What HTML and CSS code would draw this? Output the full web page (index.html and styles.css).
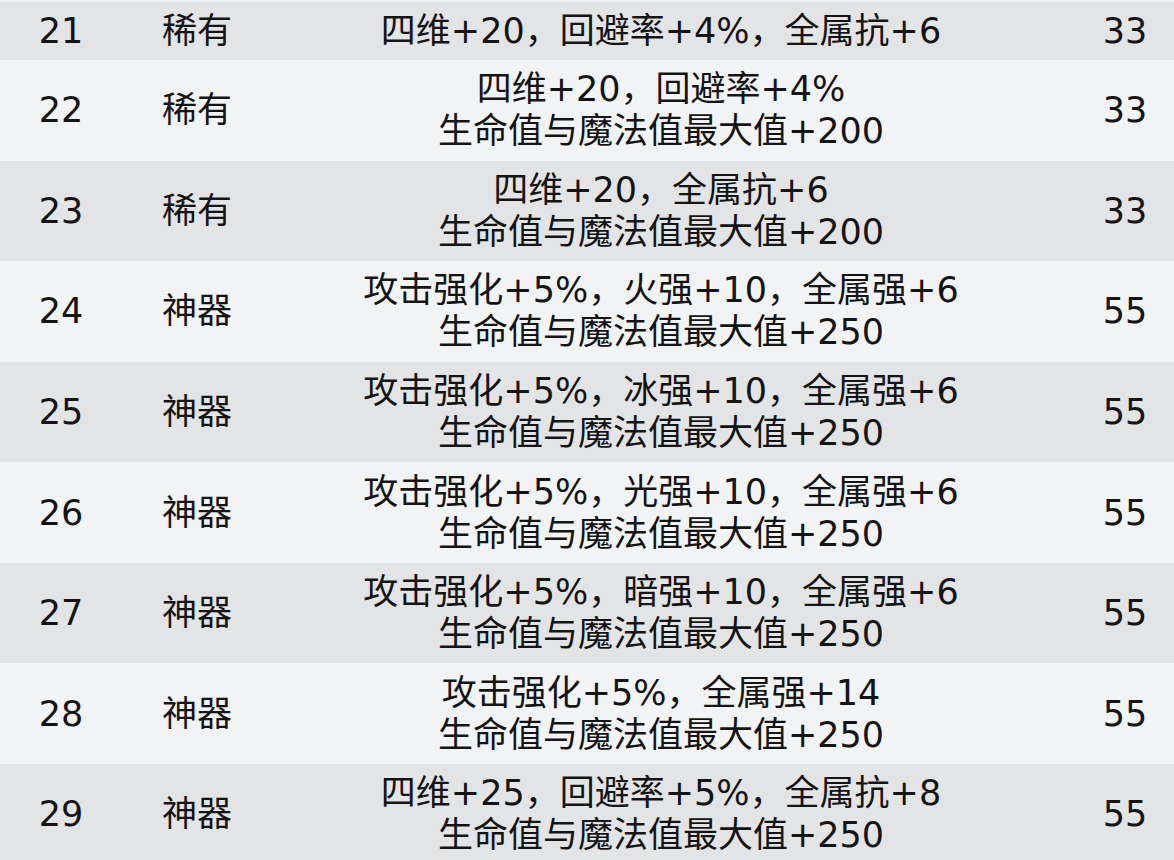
FILE: index.html
```html
<!DOCTYPE html>
<html lang="zh-CN">
<head>
<meta charset="utf-8">
<link rel="stylesheet" href="styles.css">
</head>
<body>
<div class="table">
  <div class="row gray first"><div class="c num">21</div><div class="c rare">稀有</div><div class="c eff">四维+20，回避率+4%，全属抗+6</div><div class="c val">33</div></div>
  <div class="row light"><div class="c num">22</div><div class="c rare">稀有</div><div class="c eff">四维+20，回避率+4%<br>生命值与魔法值最大值+200</div><div class="c val">33</div></div>
  <div class="row gray"><div class="c num">23</div><div class="c rare">稀有</div><div class="c eff">四维+20，全属抗+6<br>生命值与魔法值最大值+200</div><div class="c val">33</div></div>
  <div class="row light"><div class="c num">24</div><div class="c rare">神器</div><div class="c eff">攻击强化+5%，火强+10，全属强+6<br>生命值与魔法值最大值+250</div><div class="c val">55</div></div>
  <div class="row gray"><div class="c num">25</div><div class="c rare">神器</div><div class="c eff">攻击强化+5%，冰强+10，全属强+6<br>生命值与魔法值最大值+250</div><div class="c val">55</div></div>
  <div class="row light"><div class="c num">26</div><div class="c rare">神器</div><div class="c eff">攻击强化+5%，光强+10，全属强+6<br>生命值与魔法值最大值+250</div><div class="c val">55</div></div>
  <div class="row gray"><div class="c num">27</div><div class="c rare">神器</div><div class="c eff">攻击强化+5%，暗强+10，全属强+6<br>生命值与魔法值最大值+250</div><div class="c val">55</div></div>
  <div class="row light"><div class="c num">28</div><div class="c rare">神器</div><div class="c eff">攻击强化+5%，全属强+14<br>生命值与魔法值最大值+250</div><div class="c val">55</div></div>
  <div class="row gray"><div class="c num">29</div><div class="c rare">神器</div><div class="c eff">四维+25，回避率+5%，全属抗+8<br>生命值与魔法值最大值+250</div><div class="c val">55</div></div>
</div>
</body>
</html>
```
FILE: styles.css
```css
html, body {
  margin: 0;
  padding: 0;
  width: 1174px;
  height: 860px;
  overflow: hidden;
  background: #f2f3f4;
}
.table {
  display: flex;
  flex-direction: column;
  font-family: "DejaVu Sans", "Noto Sans CJK SC", sans-serif;
  font-size: 35px;
  line-height: 42px;
  color: #141414;
}
.row {
  display: grid;
  grid-template-columns: 122px 150px 778px 124px;
  height: 100.57px;
  flex: none;
}
.row.first {
  height: 60px;
  border-top: 2px solid #eef0f1;
  box-sizing: border-box;
}
.gray { background: #e3e4e5; }
.light { background: #f2f3f4; }
.c {
  display: flex;
  align-items: center;
  justify-content: center;
  text-align: center;
}
.val { padding-left: 26px; }
```
